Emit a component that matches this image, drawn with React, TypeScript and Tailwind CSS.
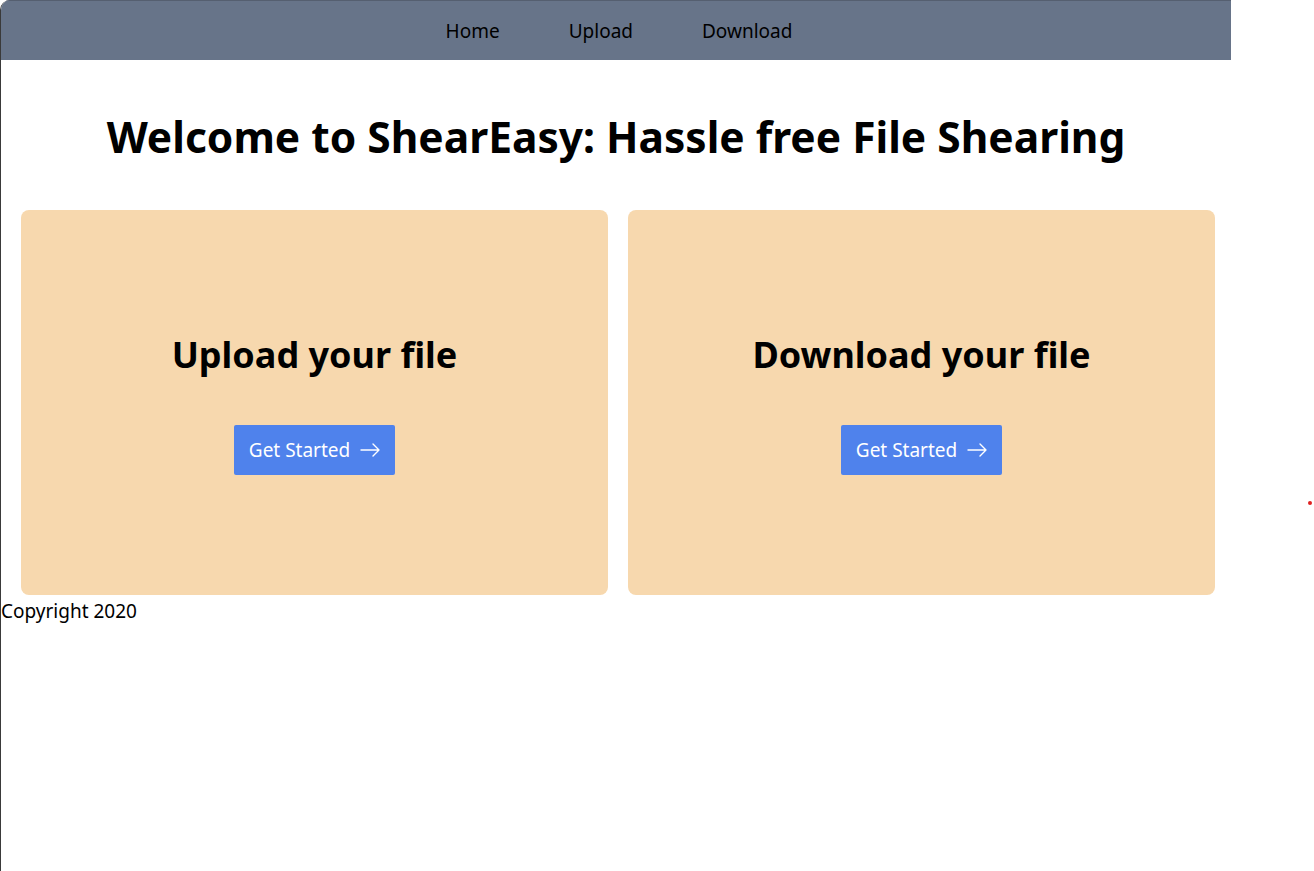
import React from "react";

function Arrow() {
  return (
    <svg width="20" height="14" viewBox="0 0 20 14" fill="none" stroke="white" strokeWidth="1.4" strokeLinecap="round" strokeLinejoin="round">
      <path d="M1 7h18M13 1l6 6-6 6" />
    </svg>
  );
}

function Card({ title }: { title: string }) {
  return (
    <div className="w-[587px] h-[385px] rounded-lg bg-[#f7d8ae] flex flex-col items-center pt-[123px]">
      <h2 className="text-[36px] font-bold leading-[44px] text-black">{title}</h2>
      <button className="mt-[48px] h-[50px] w-[161px] bg-[#4f82ec] rounded-[2px] flex items-center justify-center gap-[10px] text-white text-[19px]">
        <span>Get Started</span>
        <Arrow />
      </button>
    </div>
  );
}

export default function App() {
  return (
    <div className="w-[1314px] h-[871px] bg-white relative overflow-hidden" style={{ fontFamily: '"Noto Sans", "Open Sans", sans-serif' }}>
      <div className="w-[1231px] h-[871px] border-l border-[#3a3a3a] rounded-tl-[10px] overflow-hidden flex flex-col">
        <nav className="h-[60px] bg-[#677489] border-t border-[#555f70] flex items-center justify-center gap-[69px] pt-[2px] pl-[6px] text-[19px] text-black">
          <span>Home</span>
          <span>Upload</span>
          <span>Download</span>
        </nav>
        <h1 className="mt-[51px] text-center text-[42.5px] font-bold leading-[52px] text-black">
          Welcome to ShearEasy: Hassle free File Shearing
        </h1>
        <div className="mt-[47px] pl-[20px] flex gap-[20px]">
          <Card title="Upload your file" />
          <Card title="Download your file" />
        </div>
        <div className="text-[19px] leading-[32px] text-black">Copyright 2020</div>
      </div>
      <div className="absolute left-[1308px] top-[501px] w-[4px] h-[4px] rounded-full bg-[#e02020]" />
    </div>
  );
}
